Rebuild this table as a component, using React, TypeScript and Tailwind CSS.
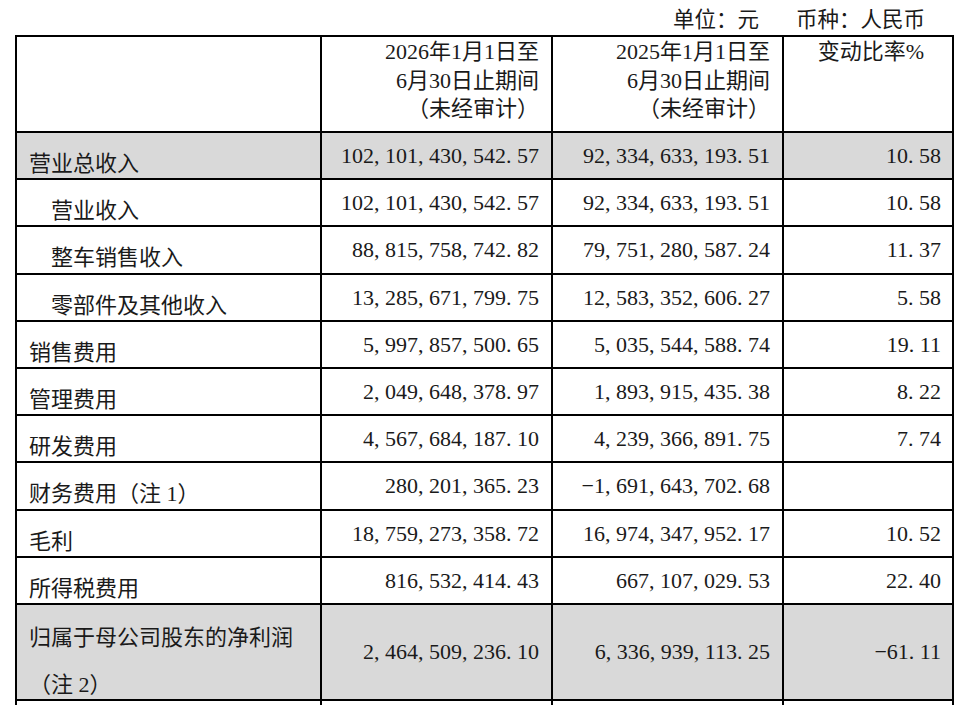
type Row = {
  label: string[];
  indent?: boolean;
  cur: string;
  prev: string;
  rate: string;
  gray?: boolean;
};

const ROWS: Row[] = [
  { label: ["营业总收入"], cur: "102,101,430,542.57", prev: "92,334,633,193.51", rate: "10.58", gray: true },
  { label: ["营业收入"], indent: true, cur: "102,101,430,542.57", prev: "92,334,633,193.51", rate: "10.58" },
  { label: ["整车销售收入"], indent: true, cur: "88,815,758,742.82", prev: "79,751,280,587.24", rate: "11.37" },
  { label: ["零部件及其他收入"], indent: true, cur: "13,285,671,799.75", prev: "12,583,352,606.27", rate: "5.58" },
  { label: ["销售费用"], cur: "5,997,857,500.65", prev: "5,035,544,588.74", rate: "19.11" },
  { label: ["管理费用"], cur: "2,049,648,378.97", prev: "1,893,915,435.38", rate: "8.22" },
  { label: ["研发费用"], cur: "4,567,684,187.10", prev: "4,239,366,891.75", rate: "7.74" },
  { label: ["财务费用（注 1）"], cur: "280,201,365.23", prev: "−1,691,643,702.68", rate: "" },
  { label: ["毛利"], cur: "18,759,273,358.72", prev: "16,974,347,952.17", rate: "10.52" },
  { label: ["所得税费用"], cur: "816,532,414.43", prev: "667,107,029.53", rate: "22.40" },
  {
    label: ["归属于母公司股东的净利润", "（注 2）"],
    cur: "2,464,509,236.10",
    prev: "6,336,939,113.25",
    rate: "−61.11",
    gray: true,
  },
];

// SimSun-like spacing: comma and point take half an em
function Num({ v }: { v: string }) {
  return (
    <span className="whitespace-nowrap">
      {v.split("").map((ch, i) =>
        ch === "," || ch === "." ? (
          <span key={i} className="inline-block w-[0.5em] text-left">
            {ch}
          </span>
        ) : (
          <span key={i}>{ch}</span>
        )
      )}
    </span>
  );
}

function DataRow({ row }: { row: Row }) {
  const tall = row.label.length > 1;
  const bg = row.gray ? "bg-[#d9d9d9]" : "";
  return (
    <tr className={tall ? "h-[92px]" : "h-[47.2px]"}>
      <td className={`border-2 border-black align-top py-0 pl-[12px] ${bg}`}>
        <div
          className={`translate-y-[9px] whitespace-nowrap ${tall ? "leading-[47px]" : "leading-[44px]"} ${
            row.indent ? "pl-[22px]" : ""
          }`}
        >
          {row.label.map((l) => (
            <div key={l}>{l}</div>
          ))}
        </div>
      </td>
      <td className={`border-2 border-black py-0 text-right pr-[12px] ${bg}`}>
        <Num v={row.cur} />
      </td>
      <td className={`border-2 border-black py-0 text-right pr-[12px] ${bg}`}>
        <Num v={row.prev} />
      </td>
      <td className={`border-2 border-black py-0 text-right pr-[11px] ${bg}`}>
        <Num v={row.rate} />
      </td>
    </tr>
  );
}

export default function App() {
  return (
    <div className="w-[969px] h-[705px] overflow-hidden bg-white text-[#1a1a1a] text-[22px] font-['Liberation_Serif','Noto_Sans_CJK_SC',serif]">
      <div className="h-[35px] pt-[6px] leading-[29px] text-right pr-[44px] text-[21.5px]">
        <span>单位：元</span>
        <span className="ml-[37px]">币种：人民币</span>
      </div>
      <table className="ml-[15px] w-[939px] table-fixed border-collapse">
        <colgroup>
          <col className="w-[305px]" />
          <col className="w-[231px]" />
          <col className="w-[231px]" />
          <col className="w-[170px]" />
        </colgroup>
        <tbody>
          <tr className="h-[96px] leading-[28.5px]">
            <td className="border-2 border-black" />
            <td className="border-2 border-black align-top text-right pr-[12px] pt-[1px]">
              <div>2026年1月1日至</div>
              <div>6月30日止期间</div>
              <div>（未经审计）</div>
            </td>
            <td className="border-2 border-black align-top text-right pr-[12px] pt-[1px]">
              <div>2025年1月1日至</div>
              <div>6月30日止期间</div>
              <div>（未经审计）</div>
            </td>
            <td className="border-2 border-black align-top text-center pt-[1px] pl-[6px]">变动比率%</td>
          </tr>
          {ROWS.map((r) => (
            <DataRow key={r.label.join("")} row={r} />
          ))}
          <tr className="h-[46px]">
            <td className="border-2 border-black" />
            <td className="border-2 border-black" />
            <td className="border-2 border-black" />
            <td className="border-2 border-black" />
          </tr>
        </tbody>
      </table>
    </div>
  );
}
